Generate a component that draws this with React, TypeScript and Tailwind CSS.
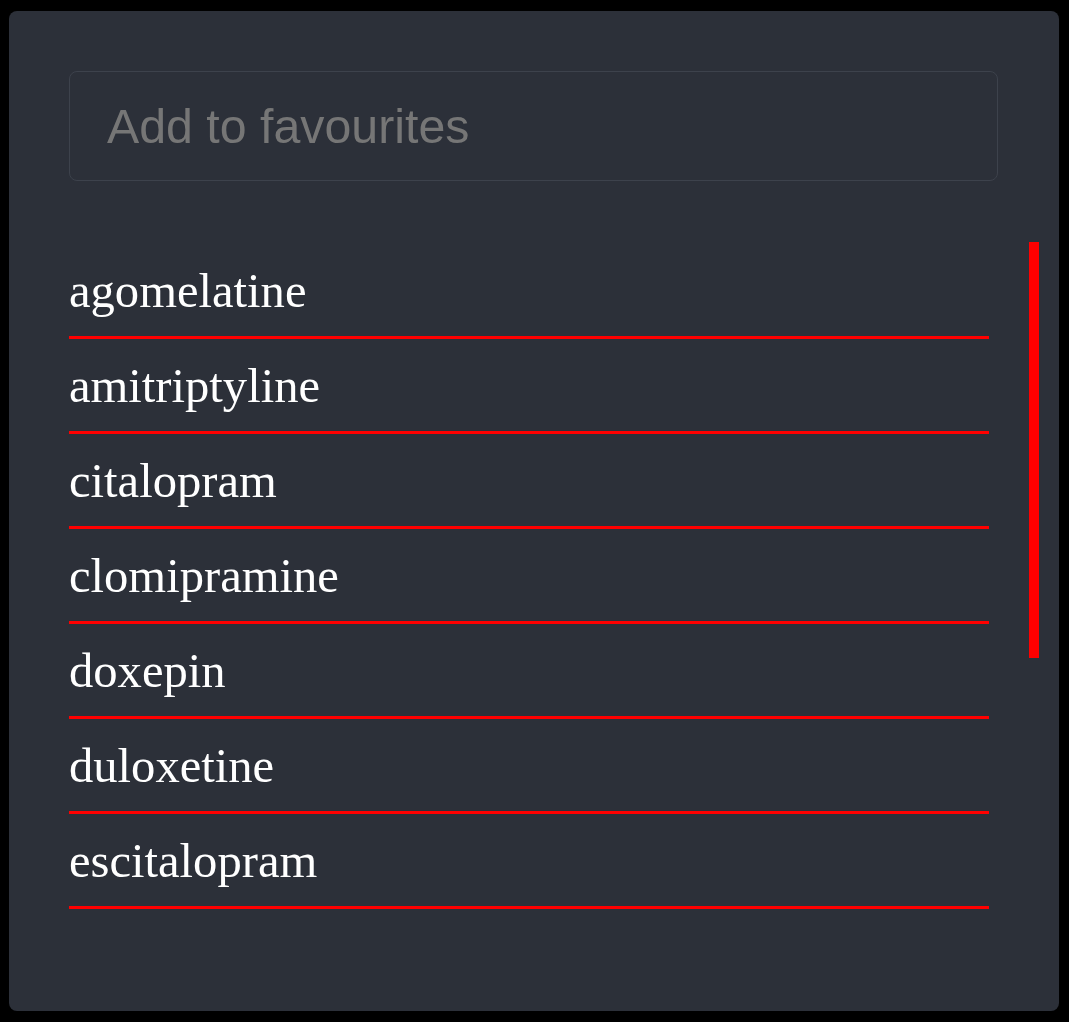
import React from "react";

const drugs = [
  "agomelatine",
  "amitriptyline",
  "citalopram",
  "clomipramine",
  "doxepin",
  "duloxetine",
  "escitalopram",
];

export default function App() {
  return (
    <div className="w-[1069px] h-[1022px] bg-black pt-[11px] pl-[9px]">
      <div className="w-[1050px] h-[1000px] rounded-[8px] bg-[#2c3039] pt-[60px] pl-[60px] overflow-hidden">
        <input
          type="text"
          placeholder="Add to favourites"
          className="block w-[929px] h-[110px] rounded-[8px] border border-[#3d424c] bg-transparent pl-[37px] pt-0 text-[48.3px] text-white placeholder:text-[#767676] outline-none"
          style={{ fontFamily: '"Liberation Sans", Arial, sans-serif' }}
        />
        <div className="mt-[61px] flex h-[668px] overflow-hidden">
          <ul className="w-[920px] pt-[2px]">
            {drugs.map((d) => (
              <li
                key={d}
                className="border-b-[3px] border-[#ff0000] pt-[20px] pb-[17px] text-[48.6px] leading-[55px] text-white"
                style={{ fontFamily: '"Liberation Serif", "Times New Roman", serif' }}
              >
                {d}
              </li>
            ))}
          </ul>
          <div className="ml-[40px] w-[10px]">
            <div className="h-[416px] w-[10px] bg-[#ff0000]" />
          </div>
        </div>
      </div>
    </div>
  );
}
